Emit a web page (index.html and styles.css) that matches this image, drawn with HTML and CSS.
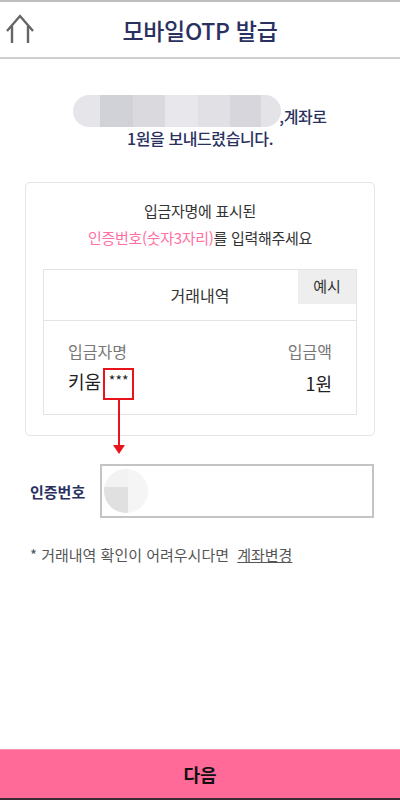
FILE: index.html
```html
<!DOCTYPE html>
<html lang="ko">
<head>
    <meta charset="utf-8">
    <title>모바일OTP 발급</title>
    <link rel="stylesheet" href="styles.css">
</head>
<body>
    <div class="page">
        <header class="top">
            <svg class="home" width="40" height="44" viewBox="0 0 40 44">
                <path d="M7 31 L20 16 L33 31 M12 26 V43 M28 26 V43" fill="none" stroke="#666" stroke-width="2.4"/>
            </svg>
            <h1>모바일OTP 발급</h1>
        </header>

        <main class="content">
            <div class="intro">
                <div class="intro-line">
                    <span class="masked"></span><span class="tail">,계좌로</span>
                </div>
                <div class="intro-line2">1원을 보내드렸습니다.</div>
            </div>

            <section class="card">
                <p class="guide">입금자명에 표시된<br><span class="pink">인증번호(숫자3자리)</span>를 입력해주세요</p>

                <div class="history">
                    <div class="history-head">거래내역</div>
                    <span class="sample">예시</span>
                    <div class="history-body">
                        <div class="row sub">
                            <span>입금자명</span>
                            <span>입금액</span>
                        </div>
                        <div class="row main">
                            <span>키움 <span class="code">***</span></span>
                            <span>1원</span>
                        </div>
                    </div>
                </div>
            </section>

            <div class="field">
                <label for="authNo">인증번호</label>
                <div class="input">
                    <span class="blot"></span>
                    <input id="authNo" type="text">
                </div>
            </div>

            <p class="note">* 거래내역 확인이 어려우시다면 <a href="#">계좌변경</a></p>
        </main>

        <button class="next" type="button">다음</button>
    </div>
</body>
</html>
```

FILE: styles.css
```css
* {
    box-sizing: border-box;
}
html, body {
    margin: 0;
    padding: 0;
}
body {
    font-family: "Noto Sans CJK KR", "Noto Sans", sans-serif;
    color: #333;
    background: #fff;
}
.page {
    width: 400px;
    height: 800px;
    display: flex;
    flex-direction: column;
}

.top {
    height: 59px;
    border-top: 2px solid #bdbdbd;
    border-bottom: 2px solid #cfcfcf;
    display: flex;
    align-items: center;
    justify-content: center;
    position: relative;
}
.home {
    position: absolute;
    left: 0;
    top: -2px;
}
.top h1 {
    margin: 0;
    font-size: 23px;
    font-weight: 500;
    color: #2a3160;
    letter-spacing: -0.3px;
}

.content {
    flex: 1;
}

.intro {
    margin-top: 36px;
    color: #2a3160;
    font-size: 16px;
    font-weight: 500;
    letter-spacing: -0.4px;
    text-align: center;
}
.intro-line {
    display: flex;
    justify-content: center;
    align-items: flex-end;
    line-height: 22px;
}
.masked {
    width: 208px;
    height: 32px;
    border-radius: 16px;
    background: linear-gradient(to right,
        #e6e6ea 0, #e6e6ea 27px,
        #d1d1d8 27px, #d1d1d8 60px,
        #dadade 60px, #dadade 92px,
        #e8e8ec 92px, #e8e8ec 125px,
        #e0e0e5 125px, #e0e0e5 157px,
        #d6d6dc 157px, #d6d6dc 188px,
        #e3e3e8 188px);
}
.tail {
    margin-left: -2px;
}
.intro-line2 {
    line-height: 22px;
}

.card {
    margin: 33px 25px 0;
    border: 1px solid #e4e4e4;
    border-radius: 5px;
    padding: 14px 17px 20px;
}
.guide {
    margin: 0;
    text-align: center;
    font-size: 15px;
    line-height: 27px;
    letter-spacing: -0.3px;
    color: #333;
}
.pink {
    color: #ff6fa3;
}

.history {
    margin-top: 18px;
    border: 1px solid #e3e3e3;
    position: relative;
}
.history-head {
    height: 51px;
    line-height: 51px;
    text-align: center;
    font-size: 16px;
    border-bottom: 1px solid #e3e3e3;
}
.sample {
    position: absolute;
    top: 0;
    right: 0;
    width: 58px;
    height: 34px;
    line-height: 32px;
    background: #eeeeee;
    text-align: center;
    font-size: 15px;
}
.history-body {
    padding: 18px 24px 14px;
}
.row {
    display: flex;
    justify-content: space-between;
    align-items: center;
}
.row.sub {
    line-height: 24px;
    color: #777;
    font-size: 16px;
}
.row.main {
    margin-top: 3px;
    line-height: 30px;
    font-size: 18px;
    color: #222;
}
.code {
    display: inline-block;
    position: relative;
    width: 31px;
    height: 32px;
    border: 2px solid #e8141c;
    font-size: 14px;
    line-height: 20px;
    text-align: center;
    vertical-align: middle;
    margin-left: -3px;
}
.code::after {
    content: "";
    position: absolute;
    left: 13px;
    top: 30px;
    width: 2px;
    height: 46px;
    background: #e8141c;
}
.code::before {
    content: "";
    position: absolute;
    left: 8px;
    top: 75px;
    border-left: 6px solid transparent;
    border-right: 6px solid transparent;
    border-top: 9px solid #e8141c;
}

.field {
    margin-top: 28px;
    padding: 0 26px 0 30px;
    display: flex;
    align-items: center;
}
.field label {
    width: 70px;
    font-size: 15px;
    font-weight: 700;
    color: #2a3160;
}
.input {
    flex: 1;
    height: 54px;
    border: 2px solid #c4c4c4;
    display: flex;
    align-items: center;
}
.blot {
    width: 44px;
    height: 44px;
    margin-left: 2px;
    border-radius: 50%;
    background:
        linear-gradient(to bottom, #f2f2f2 0, #f2f2f2 18px, transparent 18px) left / 24px 100% no-repeat,
        linear-gradient(to right, #e0e0e0 0, #e0e0e0 24px, #f5f5f5 24px);
}
.input input {
    flex: 1;
    border: 0;
    outline: none;
    height: 100%;
    background: transparent;
}

.note {
    margin: 27px 0 0 30px;
    font-size: 15px;
    line-height: 20px;
    color: #555;
}
.note a {
    color: #555;
    margin-left: 4px;
}

.next {
    height: 51px;
    border: 0;
    border-top: 1px solid #ff8fb1;
    border-bottom: 2px solid #3b2a33;
    background: #ff6a98;
    font-family: inherit;
    font-size: 18px;
    font-weight: 700;
    color: #111;
}
```
